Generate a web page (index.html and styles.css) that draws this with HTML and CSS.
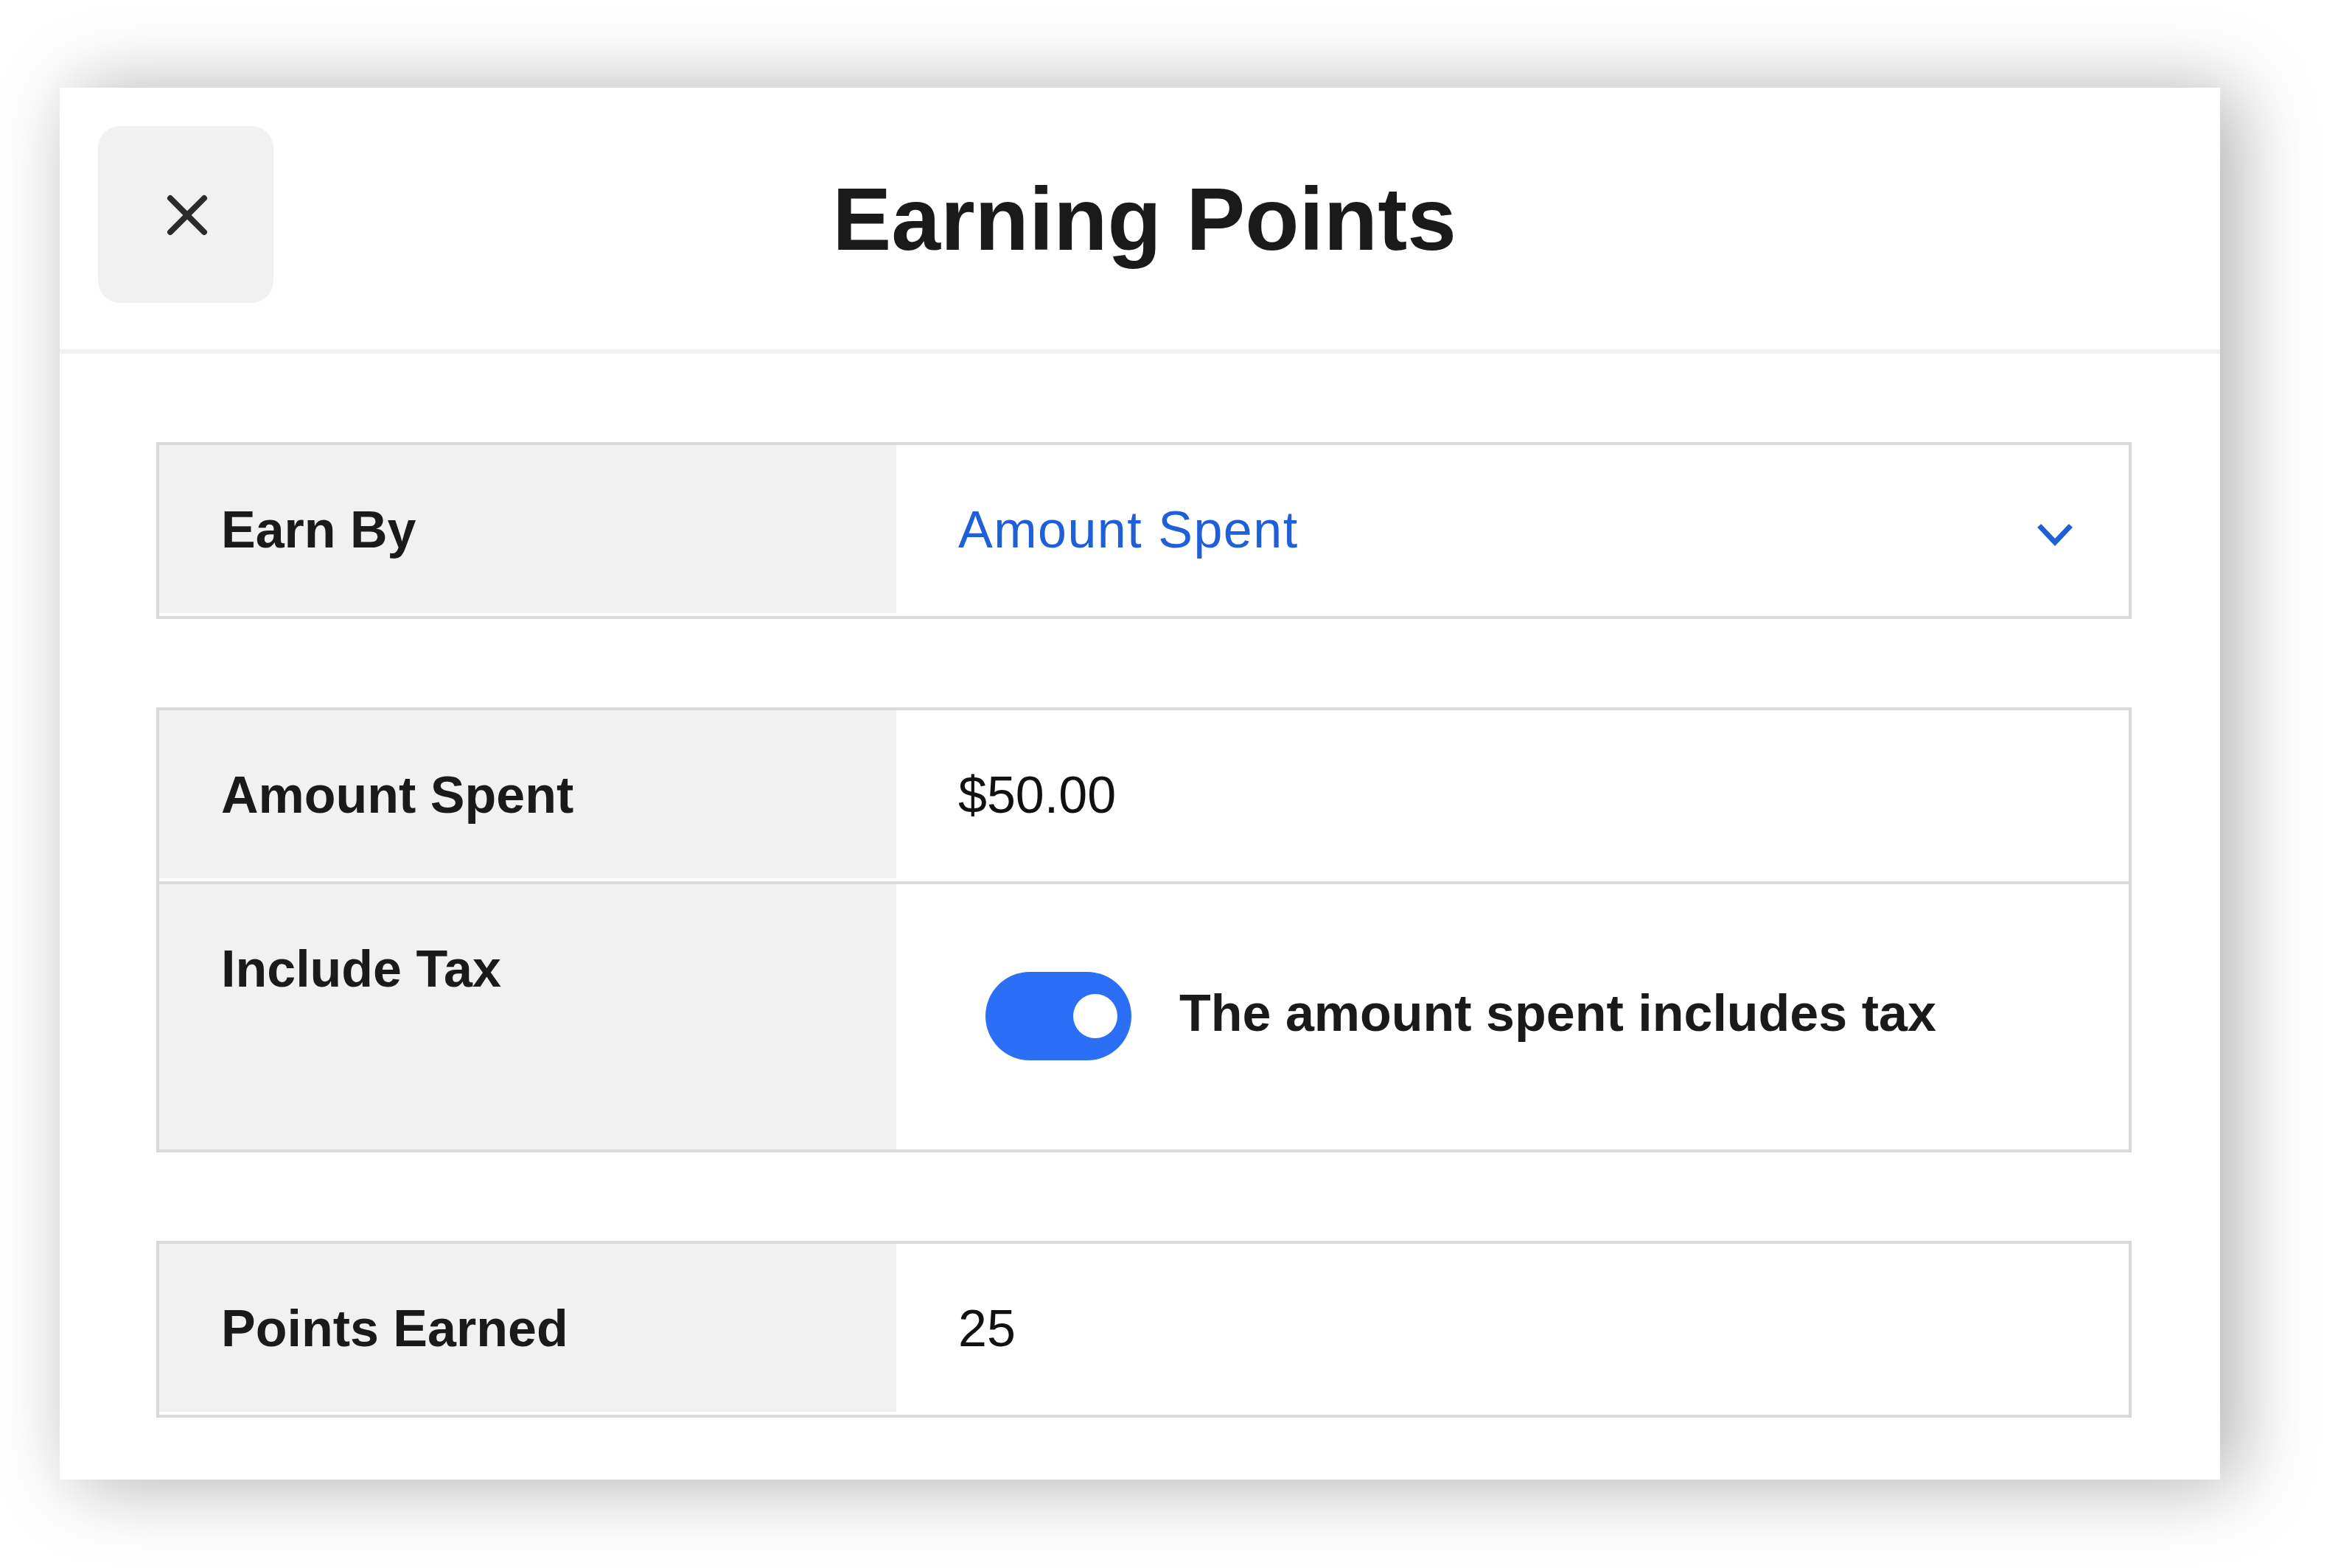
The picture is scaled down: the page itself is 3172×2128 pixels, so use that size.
FILE: index.html
```html
<!DOCTYPE html>
<html lang="en">
<head>
<meta charset="utf-8">
<title>Earning Points</title>
<link rel="stylesheet" href="styles.css">
</head>
<body>
<div class="modal">
  <header class="modal-header">
    <button class="close-btn" aria-label="Close">
      <svg class="close-icon" viewBox="0 0 56 56" width="56" height="56">
        <path d="M5 5 L51 51 M51 5 L5 51" stroke="#2b2b2b" stroke-width="8" stroke-linecap="round" fill="none"/>
      </svg>
    </button>
    <h1 class="title">Earning Points</h1>
    <div class="header-spacer"></div>
  </header>
  <div class="modal-body">
    <section class="card">
      <div class="row">
        <div class="label">Earn By</div>
        <div class="value value-select">
          <span class="select-text">Amount Spent</span>
          <svg class="chevron" viewBox="0 0 48 30" width="48" height="30">
            <path d="M5 5 L24 25 L43 5" stroke="#1f5fd8" stroke-width="7" stroke-linecap="square" stroke-linejoin="miter" fill="none"/>
          </svg>
        </div>
      </div>
    </section>
    <section class="card">
      <div class="row">
        <div class="label">Amount Spent</div>
        <div class="value">$50.00</div>
      </div>
      <div class="row row-tall">
        <div class="label">Include Tax</div>
        <div class="value">
          <div class="toggle-wrap">
            <span class="toggle"><span class="knob"></span></span>
            <span class="toggle-text">The amount spent includes tax</span>
          </div>
        </div>
      </div>
    </section>
    <section class="card">
      <div class="row">
        <div class="label">Points Earned</div>
        <div class="value">25</div>
      </div>
    </section>
  </div>
</div>
</body>
</html>
```

FILE: styles.css
```css
* { box-sizing: border-box; }

html, body {
  margin: 0;
  padding: 0;
  background: #ffffff;
}

body {
  font-family: "Liberation Sans", Arial, sans-serif;
  color: #1a1a1a;
  padding: 119px 0 0 81px;
  height: 2128px;
  overflow: hidden;
}

.modal {
  width: 2931px;
  height: 1889px;
  background: #ffffff;
  box-shadow: 22px 4px 100px rgba(0, 0, 0, 0.32);
  display: flex;
  flex-direction: column;
}

.modal-header {
  height: 361px;
  border-bottom: 6px solid #f1f1f1;
  display: grid;
  grid-template-columns: 240px 1fr 240px;
  align-items: start;
  padding: 52px 52px 0 52px;
}

.close-btn {
  width: 238px;
  height: 240px;
  border: none;
  border-radius: 30px;
  background: #f1f1f1;
  display: flex;
  align-items: center;
  justify-content: center;
  padding: 0;
  cursor: pointer;
}

.close-icon { display: block; margin: 2px 0 0 4px; }

.title {
  margin: 0;
  align-self: center;
  margin-top: -52px;
  text-align: center;
  font-size: 120px;
  line-height: 1;
  font-weight: 700;
  color: #1a1a1a;
  padding-left: 12px;
}

.modal-body {
  padding: 120px 120px 84px 131px;
  display: flex;
  flex-direction: column;
  gap: 120px;
}

.card {
  border: 4px solid #d9d9d9;
  background: #ffffff;
}

.row {
  display: flex;
  min-height: 232px;
}

.row + .row {
  border-top: 4px solid #d9d9d9;
}

.row-tall {
  min-height: 364px;
}

.label {
  width: 1000px;
  flex: 0 0 1000px;
  background: #f1f1f1;
  margin-bottom: 4px;
  padding: 80px 0 0 84px;
  font-size: 70px;
  line-height: 1;
  font-weight: 700;
  color: #1a1a1a;
}

.row-tall .label {
  margin-bottom: 0;
}

.value {
  flex: 1;
  display: flex;
  align-items: center;
  padding: 0 76px 2px 84px;
  font-size: 70px;
  line-height: 1;
  font-weight: 400;
  color: #111111;
}

.value-select {
  justify-content: space-between;
}

.select-text {
  color: #1f5fd8;
  letter-spacing: 1.5px;
}

.chevron { display: block; margin-top: 14px; }

.toggle-wrap {
  display: flex;
  align-items: center;
  gap: 65px;
  margin-left: 37px;
}

.toggle {
  width: 198px;
  height: 120px;
  border-radius: 60px;
  background: #2a6ff6;
  display: flex;
  align-items: center;
  justify-content: flex-end;
  padding-right: 19px;
  flex: 0 0 auto;
}

.knob {
  width: 60px;
  height: 60px;
  border-radius: 50%;
  background: #ffffff;
}

.toggle-text {
  font-size: 70px;
  font-weight: 700;
  color: #1a1a1a;
  margin-top: -8px;
}
```
